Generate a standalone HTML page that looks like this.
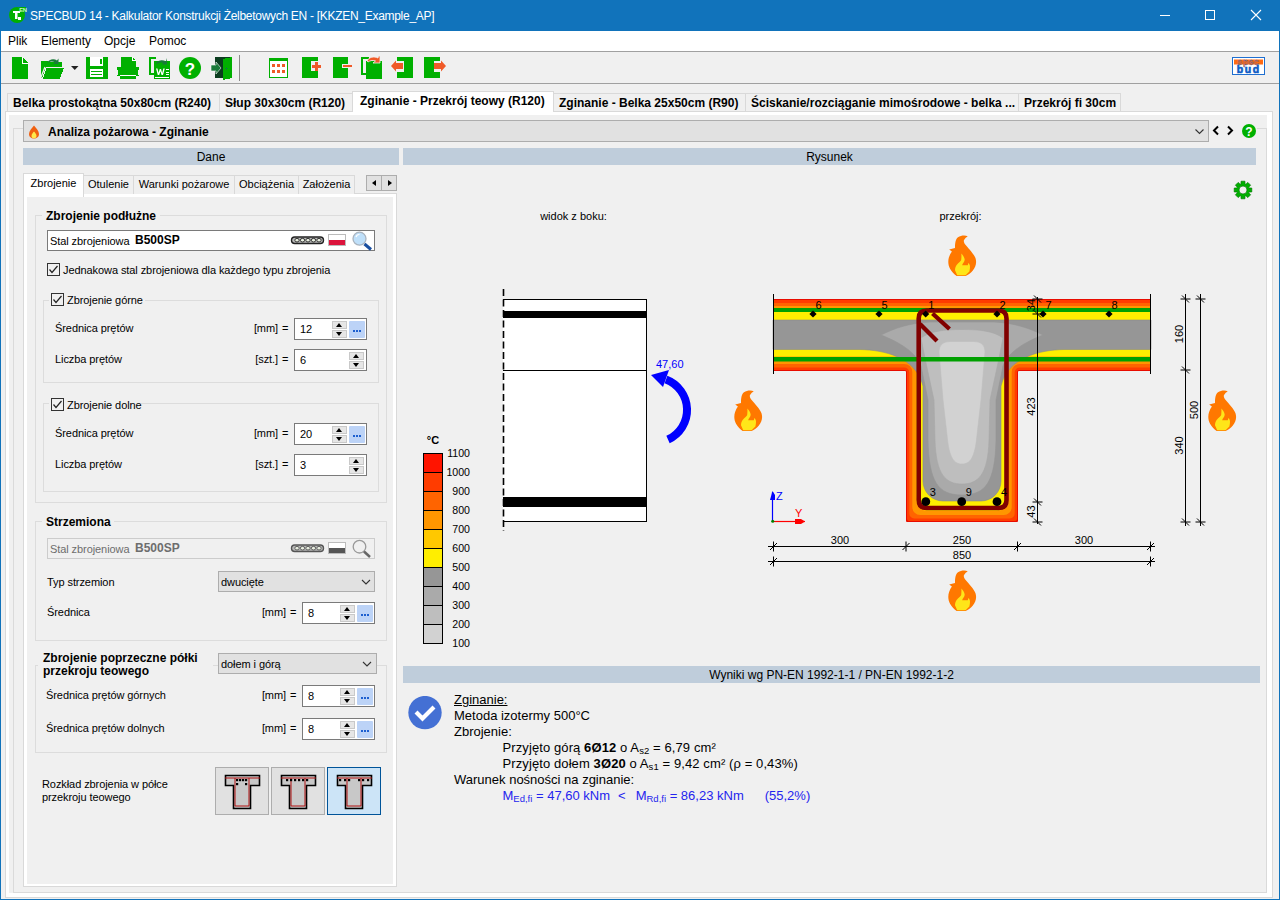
<!DOCTYPE html>
<html><head><meta charset="utf-8">
<style>
*{box-sizing:border-box;margin:0;padding:0}
html,body{width:1280px;height:900px;overflow:hidden;background:#f0f0f0;font-family:"Liberation Sans",sans-serif;font-size:12px;color:#000}
.a{position:absolute}
#title{left:0;top:0;width:1280px;height:31px;background:#1173bb}
#title .t{left:30px;top:9px;color:#fff;font-size:12px;letter-spacing:-0.29px;white-space:nowrap}
#menu{left:1px;top:31px;width:1278px;height:20px;background:#fff}
#menu span{position:absolute;top:3px}
.sep{background:#a0a0a0}
.tab{position:absolute;top:93px;height:19px;background:#f0f0f0;border:1px solid #d9d9d9;border-bottom:none;font-weight:bold;font-size:12px;white-space:nowrap;padding:2px 0 0 5px}
.tab.sel{top:91px;height:21px;background:#fff;border-color:#d9d9d9;z-index:2}
.hdr{background:#bfcddb;height:17px;text-align:center;font-size:12px;line-height:18px}

.r{font-size:11px;letter-spacing:-0.08px;line-height:13px;white-space:nowrap;position:absolute;margin-top:1px}
.b{font-weight:bold;font-size:12px;line-height:14px;white-space:nowrap;position:absolute}
.grp{position:absolute;border:1px solid #dcdcdc}
.itab{position:absolute;top:175px;height:19px;border:1px solid #d9d9d9;border-bottom:none;background:#f0f0f0;font-size:11px;line-height:16px;padding-left:0;text-align:center;white-space:nowrap}
.inp{position:absolute;width:73px;height:22px;background:#fff;border:1px solid #7a7a7a}
.inp .v{position:absolute;left:5px;top:4px;font-size:11px;line-height:13px}
.spn{position:absolute;width:15px;height:8px;background:#e6e6e6;border:1px solid #c9c9c9}
.spn i{position:absolute;left:3px;width:0;height:0;border-left:3.5px solid transparent;border-right:3.5px solid transparent}
.spn.u i{top:1px;border-bottom:4px solid #000}
.spn.d i{top:1px;border-top:4px solid #000}
.dots{position:absolute;width:16px;height:17px;background:#bcd3f7;border-radius:1px}
.dots b{position:absolute;top:9px;width:2px;height:2px;background:#1c5fd0}
.chk{position:absolute;width:13px;height:13px;border:1px solid #333;background:#f0f0f0}
.dd{position:absolute;background:#e1e1e1;border:1px solid #adadad}
.mat{position:absolute;width:328px;height:21px;background:#fff;border:1px solid #7a7a7a}
</style></head><body>
<!-- window frame -->
<div class="a" style="left:0;top:0;width:1px;height:900px;background:#1173bb"></div>
<div class="a" style="left:1279px;top:0;width:1px;height:900px;background:#1173bb"></div>
<div class="a" style="left:0;top:899px;width:1280px;height:1px;background:#1173bb"></div>
<div id="title" class="a">
  <div class="a t">SPECBUD 14 - Kalkulator Konstrukcji Żelbetowych EN - [KKZEN_Example_AP]</div>
</div>
<div id="menu" class="a">
  <span style="left:7px">Plik</span><span style="left:40px">Elementy</span><span style="left:103px">Opcje</span><span style="left:148px">Pomoc</span>
</div>
<div class="a sep" style="left:1px;top:51px;width:1278px;height:1px"></div>
<div class="a sep" style="left:1px;top:83px;width:1278px;height:1px"></div>

<!-- document tabs -->
<div class="tab" style="left:7px;width:213px">Belka prostokątna 50x80cm (R240)</div>
<div class="tab" style="left:219px;width:134px">Słup 30x30cm (R120)</div>
<div class="tab sel" style="left:352px;width:202px;padding-left:7px">Zginanie - Przekrój teowy (R120)</div>
<div class="tab" style="left:553px;width:193px">Zginanie - Belka 25x50cm (R90)</div>
<div class="tab" style="left:745px;width:274px">Ściskanie/rozciąganie mimośrodowe - belka ...</div>
<div class="tab" style="left:1018px;width:103px">Przekrój fi 30cm</div>

<!-- doc panel -->
<div class="a" style="left:5px;top:111px;width:1268px;height:787px;background:#fff;border:1px solid #d9d9d9"></div>
<div class="a" style="left:9px;top:115px;width:1258px;height:778px;background:#f0f0f0"></div>

<!-- function combo -->
<div class="a" style="left:23px;top:120px;width:1186px;height:22px;background:#e1e1e1;border:1px solid #adadad"></div>
<div class="a" style="left:48px;top:125px;font-weight:bold">Analiza pożarowa - Zginanie</div>

<div class="a hdr" style="left:23px;top:148px;width:376px">Dane</div>
<div class="a hdr" style="left:403px;top:148px;width:853px">Rysunek</div>


<!-- ===== LEFT PANEL ===== -->
<!-- inner frame lines -->
<div class="a" style="left:13px;top:128px;width:1254px;height:765px;border:1px solid #dadada;border-top:none"></div><div class="a" style="left:13px;top:128px;width:10px;height:1px;background:#dadada"></div><div class="a" style="left:1257px;top:128px;width:10px;height:1px;background:#dadada"></div>
<!-- Left tab page frame -->
<div class="a" style="left:23px;top:193px;width:374px;height:694px;background:#fff;border:1px solid #d9d9d9"></div>
<div class="a" style="left:27px;top:197px;width:366px;height:687px;background:#f0f0f0"></div>
<!-- inner tabs -->
<div class="itab" style="left:83px;width:51px">Otulenie</div>
<div class="itab" style="left:133px;width:102px">Warunki pożarowe</div>
<div class="itab" style="left:234px;width:65px">Obciążenia</div>
<div class="itab" style="left:298px;width:57px">Założenia</div>
<div class="itab" style="left:23px;top:173px;width:61px;height:24px;background:#fff;border-color:#d9d9d9;line-height:18px">Zbrojenie</div>
<div class="a" style="left:366px;top:175px;width:16px;height:16px;background:#e1e1e1;border:1px solid #adadad"><i style="position:absolute;left:5px;top:4px;border-top:3.5px solid transparent;border-bottom:3.5px solid transparent;border-right:4px solid #000"></i></div>
<div class="a" style="left:381px;top:175px;width:16px;height:16px;background:#e1e1e1;border:1px solid #adadad"><i style="position:absolute;left:6px;top:4px;border-top:3.5px solid transparent;border-bottom:3.5px solid transparent;border-left:4px solid #000"></i></div>

<!-- group: Zbrojenie podluzne -->
<div class="grp" style="left:35px;top:215px;width:352px;height:288px"></div>
<div class="a" style="left:42px;top:209px;width:118px;height:12px;background:#f0f0f0"></div>
<div class="b" style="left:46px;top:209px">Zbrojenie podłużne</div>
<div class="mat" style="left:47px;top:230px"></div>
<div class="r" style="left:50px;top:234px">Stal zbrojeniowa</div>
<div class="b" style="left:135px;top:233px">B500SP</div>
<div id="ic1" class="a" style="left:290px;top:233px;width:84px;height:18px"></div>

<div class="chk" style="left:47px;top:263px"></div>
<div class="r" style="left:63px;top:263px">Jednakowa stal zbrojeniowa dla każdego typu zbrojenia</div>

<div class="grp" style="left:43px;top:300px;width:336px;height:83px"></div>
<div class="a" style="left:49px;top:292px;width:96px;height:14px;background:#f0f0f0"></div>
<div class="chk" style="left:51px;top:293px"></div>
<div class="r" style="left:67px;top:293px">Zbrojenie górne</div>
<div class="r" style="left:55px;top:321px">Średnica prętów</div>
<div class="r" style="left:253px;top:321px;width:25px;text-align:right">[mm]</div><div class="r" style="left:282px;top:321px">=</div>
<div class="inp" style="left:294px;top:318px"><span class="v">12</span><div class="spn u" style="left:37px;top:2px"><i></i></div><div class="spn d" style="left:37px;top:11px"><i></i></div><div class="dots" style="left:54px;top:2px"><b style="left:4px"></b><b style="left:7px"></b><b style="left:10px"></b></div></div>
<div class="r" style="left:55px;top:352px">Liczba prętów</div>
<div class="r" style="left:253px;top:352px;width:25px;text-align:right">[szt.]</div><div class="r" style="left:282px;top:352px">=</div>
<div class="inp" style="left:294px;top:349px"><span class="v">6</span><div class="spn u" style="left:54px;top:2px"><i></i></div><div class="spn d" style="left:54px;top:11px"><i></i></div></div>

<div class="grp" style="left:43px;top:403px;width:336px;height:89px"></div>
<div class="a" style="left:49px;top:397px;width:92px;height:14px;background:#f0f0f0"></div>
<div class="chk" style="left:51px;top:398px"></div>
<div class="r" style="left:67px;top:398px">Zbrojenie dolne</div>
<div class="r" style="left:55px;top:426px">Średnica prętów</div>
<div class="r" style="left:253px;top:426px;width:25px;text-align:right">[mm]</div><div class="r" style="left:282px;top:426px">=</div>
<div class="inp" style="left:294px;top:423px"><span class="v">20</span><div class="spn u" style="left:37px;top:2px"><i></i></div><div class="spn d" style="left:37px;top:11px"><i></i></div><div class="dots" style="left:54px;top:2px"><b style="left:4px"></b><b style="left:7px"></b><b style="left:10px"></b></div></div>
<div class="r" style="left:55px;top:457px">Liczba prętów</div>
<div class="r" style="left:253px;top:457px;width:25px;text-align:right">[szt.]</div><div class="r" style="left:282px;top:457px">=</div>
<div class="inp" style="left:294px;top:454px"><span class="v">3</span><div class="spn u" style="left:54px;top:2px"><i></i></div><div class="spn d" style="left:54px;top:11px"><i></i></div></div>

<!-- group: Strzemiona -->
<div class="grp" style="left:35px;top:521px;width:352px;height:120px"></div>
<div class="a" style="left:42px;top:515px;width:72px;height:12px;background:#f0f0f0"></div>
<div class="b" style="left:46px;top:515px">Strzemiona</div>
<div class="mat" style="left:47px;top:538px;height:21px;background:#f0f0f0;border-color:#cccccc"></div>
<div class="r" style="left:50px;top:542px;color:#6d6d6d">Stal zbrojeniowa</div>
<div class="b" style="left:135px;top:541px;color:#6d6d6d">B500SP</div>
<div id="ic2" class="a" style="left:290px;top:541px;width:84px;height:18px"></div>
<div class="r" style="left:47px;top:575px">Typ strzemion</div>
<div class="dd" style="left:218px;top:571px;width:157px;height:21px"></div>
<div class="r" style="left:221px;top:575px">dwucięte</div>
<div class="r" style="left:47px;top:605px">Średnica</div>
<div class="r" style="left:261px;top:605px;width:25px;text-align:right">[mm]</div><div class="r" style="left:290px;top:605px">=</div>
<div class="inp" style="left:302px;top:602px"><span class="v">8</span><div class="spn u" style="left:37px;top:2px"><i></i></div><div class="spn d" style="left:37px;top:11px"><i></i></div><div class="dots" style="left:54px;top:2px"><b style="left:4px"></b><b style="left:7px"></b><b style="left:10px"></b></div></div>

<!-- group: Zbrojenie poprzeczne -->
<div class="grp" style="left:35px;top:665px;width:352px;height:88px"></div>
<div class="a" style="left:38px;top:650px;width:175px;height:28px;background:#f0f0f0"></div>
<div class="b" style="left:43px;top:652px;line-height:13px">Zbrojenie poprzeczne półki<br>przekroju teowego</div>
<div class="dd" style="left:218px;top:653px;width:159px;height:21px"></div>
<div class="r" style="left:221px;top:657px">dołem i górą</div>
<div class="r" style="left:46px;top:688px">Średnica prętów górnych</div>
<div class="r" style="left:261px;top:688px;width:25px;text-align:right">[mm]</div><div class="r" style="left:290px;top:688px">=</div>
<div class="inp" style="left:302px;top:685px"><span class="v">8</span><div class="spn u" style="left:37px;top:2px"><i></i></div><div class="spn d" style="left:37px;top:11px"><i></i></div><div class="dots" style="left:54px;top:2px"><b style="left:4px"></b><b style="left:7px"></b><b style="left:10px"></b></div></div>
<div class="r" style="left:46px;top:721px">Średnica prętów dolnych</div>
<div class="r" style="left:261px;top:721px;width:25px;text-align:right">[mm]</div><div class="r" style="left:290px;top:721px">=</div>
<div class="inp" style="left:302px;top:718px"><span class="v">8</span><div class="spn u" style="left:37px;top:2px"><i></i></div><div class="spn d" style="left:37px;top:11px"><i></i></div><div class="dots" style="left:54px;top:2px"><b style="left:4px"></b><b style="left:7px"></b><b style="left:10px"></b></div></div>

<div class="r" style="left:42px;top:777px">Rozkład zbrojenia w półce<br>przekroju teowego</div>
<div id="tb1" class="a" style="left:215px;top:767px;width:54px;height:48px;background:#e1e1e1;border:1px solid #adadad"></div>
<div id="tb2" class="a" style="left:271px;top:767px;width:54px;height:48px;background:#e1e1e1;border:1px solid #adadad"></div>
<div id="tb3" class="a" style="left:327px;top:767px;width:54px;height:48px;background:#cce4f7;border:1px solid #005499"></div>
<!--DRAW-->
<svg class="a" style="left:0;top:0" width="1280" height="900" viewBox="0 0 1280 900">
<path d="M773,299H1151V371H1019A1,1 0 0 0 1018,372V521A1,1 0 0 1 1017,522H907A1,1 0 0 1 906,521V372A1,1 0 0 0 905,371H773Z" fill="#e80c00"/>
<path d="M773,300H1151V370H1020A3,3 0 0 0 1017,373V519A2,2 0 0 1 1015,521H909A2,2 0 0 1 907,519V373A3,3 0 0 0 904,370H773Z" fill="#ff3c00"/>
<path d="M773,303H1151V367.5H1019.7A5,5 0 0 0 1014.7,372.5V513.5A5,5 0 0 1 1009.7,518.5H914.3A5,5 0 0 1 909.3,513.5V372.5A5,5 0 0 0 904.3,367.5H773Z" fill="#ff6400"/>
<path d="M773,306H1151V364H1019.7A8,8 0 0 0 1011.7,372V507A8,8 0 0 1 1003.7,515H920.3A8,8 0 0 1 912.3,507V372A8,8 0 0 0 904.3,364H773Z" fill="#ff9600"/>
<path d="M773,309H1151V360H1019A11,11 0 0 0 1008,371V500A11,11 0 0 1 997,511H927A11,11 0 0 1 916,500V371A11,11 0 0 0 905,360H773Z" fill="#ffc800"/>
<path d="M773,312H1151V356H1021.5A14,14 0 0 0 1007.5,370V495A13,13 0 0 1 994.5,508H929.5A13,13 0 0 1 916.5,495V370A14,14 0 0 0 902.5,356H773Z" fill="#ffee00"/>
<path d="M773,320H1151V349.5H1064C1040,350 1008,357 1001,386V481A20,20 0 0 1 981,501H943A20,20 0 0 1 923,481V386C916,357 884,350 860,349.5H773Z" fill="#969696" stroke="#8a8a8a" stroke-width="0.6"/>
<path d="M881,335C895,328 910,323 930,322H994C1014,323 1029,328 1043,335C1025,342 1008,352 1003,366L996,400L996,440C995,482 986,495 962,495C938,495 929,482 928,440L928,400L921,366C916,352 899,342 881,335Z" fill="#aaaaaa" stroke="#959595" stroke-width="0.6"/>
<path d="M921,338C930,331 945,329.5 962,329.5C979,329.5 994,331 1003,338L998,363L990,400L989,440C988,475 978,484 962,484C946,484 936,475 935,440L934,400L926,363Z" fill="#bebebe" stroke="#a8a8a8" stroke-width="0.6"/>
<path d="M939,352Q939,341.5 950,341.5H974Q985,341.5 985,352L981,400L977,435C975,458 970,464 962,464C954,464 949,458 947,435L943,400Z" fill="#d2d2d2" stroke="#bdbdbd" stroke-width="0.6"/>
<rect x="773" y="308" width="378" height="4" fill="#00a000"/>
<rect x="773" y="357" width="378" height="4.5" fill="#00a000"/>
<path d="M918.7,318.5Q918.7,310.5 926.7,310.5H998.5Q1006.5,310.5 1006.5,318.5V500Q1006.5,508 998.5,508H926.7Q918.7,508 918.7,500Z" fill="none" stroke="#800000" stroke-width="4.6"/>
<path d="M920,324L937,341M932.5,313.5L949.5,329" stroke="#800000" stroke-width="4.3" fill="none"/>
<path d="M809.4,314L813,310.4L816.6,314L813,317.6Z" fill="#000"/>
<path d="M875.4,314L879,310.4L882.6,314L879,317.6Z" fill="#000"/>
<path d="M922.1,314L925.7,310.4L929.3000000000001,314L925.7,317.6Z" fill="#000"/>
<path d="M993.4,314L997,310.4L1000.6,314L997,317.6Z" fill="#000"/>
<path d="M1039.4,314L1043,310.4L1046.6,314L1043,317.6Z" fill="#000"/>
<path d="M1105.4,314L1109,310.4L1112.6,314L1109,317.6Z" fill="#000"/>
<circle cx="925.8" cy="501.7" r="4.4" fill="#000"/>
<circle cx="961.7" cy="501.7" r="4.4" fill="#000"/>
<circle cx="997" cy="501.7" r="4.4" fill="#000"/>
<text x="818.5" y="309" font-size="11" font-family="Liberation Sans" text-anchor="middle" fill="#000">6</text>
<text x="884.5" y="309" font-size="11" font-family="Liberation Sans" text-anchor="middle" fill="#000">5</text>
<text x="931.2" y="309" font-size="11" font-family="Liberation Sans" text-anchor="middle" fill="#000">1</text>
<text x="1002.5" y="309" font-size="11" font-family="Liberation Sans" text-anchor="middle" fill="#000">2</text>
<text x="1048.5" y="309" font-size="11" font-family="Liberation Sans" text-anchor="middle" fill="#000">7</text>
<text x="1114.5" y="309" font-size="11" font-family="Liberation Sans" text-anchor="middle" fill="#000">8</text>
<text x="932.8" y="496" font-size="11" font-family="Liberation Sans" text-anchor="middle" fill="#000">3</text>
<text x="968.7" y="496" font-size="11" font-family="Liberation Sans" text-anchor="middle" fill="#000">9</text>
<text x="1004" y="496" font-size="11" font-family="Liberation Sans" text-anchor="middle" fill="#000">4</text>
<path d="M773.5,294V374M1150.5,294V374" stroke="#000" stroke-width="1" fill="none" shape-rendering="crispEdges"/>
<path d="M1037.5,297V524" stroke="#000" stroke-width="1" fill="none" shape-rendering="crispEdges"/>
<path d="M1032.5,299H1042.5M1034.0,295.5L1041.0,302.5" stroke="#000" stroke-width="1" fill="none"/>
<path d="M1032.5,314H1042.5M1034.0,310.5L1041.0,317.5" stroke="#000" stroke-width="1" fill="none"/>
<path d="M1032.5,502H1042.5M1034.0,498.5L1041.0,505.5" stroke="#000" stroke-width="1" fill="none"/>
<path d="M1032.5,522H1042.5M1034.0,518.5L1041.0,525.5" stroke="#000" stroke-width="1" fill="none"/>
<path d="M1185.5,294V526M1200.5,294V526" stroke="#000" stroke-width="1" fill="none" shape-rendering="crispEdges"/>
<path d="M1180.5,299H1190.5M1182.0,295.5L1189.0,302.5" stroke="#000" stroke-width="1" fill="none"/>
<path d="M1180.5,370H1190.5M1182.0,366.5L1189.0,373.5" stroke="#000" stroke-width="1" fill="none"/>
<path d="M1180.5,522H1190.5M1182.0,518.5L1189.0,525.5" stroke="#000" stroke-width="1" fill="none"/>
<path d="M1195.5,299H1205.5M1197.0,295.5L1204.0,302.5" stroke="#000" stroke-width="1" fill="none"/>
<path d="M1195.5,522H1205.5M1197.0,518.5L1204.0,525.5" stroke="#000" stroke-width="1" fill="none"/>
<path d="M768,546.5H1155M768,561.5H1155" stroke="#000" stroke-width="1" fill="none" shape-rendering="crispEdges"/>
<path d="M773.5,541.5V551.5M770.0,550.0L777.0,543.0" stroke="#000" stroke-width="1" fill="none"/>
<path d="M906,541.5V551.5M902.5,550.0L909.5,543.0" stroke="#000" stroke-width="1" fill="none"/>
<path d="M1017.5,541.5V551.5M1014.0,550.0L1021.0,543.0" stroke="#000" stroke-width="1" fill="none"/>
<path d="M1150.5,541.5V551.5M1147.0,550.0L1154.0,543.0" stroke="#000" stroke-width="1" fill="none"/>
<path d="M773.5,556.5V566.5M770.0,565.0L777.0,558.0" stroke="#000" stroke-width="1" fill="none"/>
<path d="M1150.5,556.5V566.5M1147.0,565.0L1154.0,558.0" stroke="#000" stroke-width="1" fill="none"/>
<text x="1178.5" y="334" transform="rotate(-90 1178.5 334)" font-size="11" font-family="Liberation Sans" text-anchor="middle" dominant-baseline="central" fill="#000">160</text>
<text x="1178.5" y="445.5" transform="rotate(-90 1178.5 445.5)" font-size="11" font-family="Liberation Sans" text-anchor="middle" dominant-baseline="central" fill="#000">340</text>
<text x="1193.5" y="410" transform="rotate(-90 1193.5 410)" font-size="11" font-family="Liberation Sans" text-anchor="middle" dominant-baseline="central" fill="#000">500</text>
<text x="1030.5" y="406.5" transform="rotate(-90 1030.5 406.5)" font-size="11" font-family="Liberation Sans" text-anchor="middle" dominant-baseline="central" fill="#000">423</text>
<text x="1030.5" y="511.5" transform="rotate(-90 1030.5 511.5)" font-size="11" font-family="Liberation Sans" text-anchor="middle" dominant-baseline="central" fill="#000">43</text>
<text x="1030.5" y="305" transform="rotate(-90 1030.5 305)" font-size="11" font-family="Liberation Sans" text-anchor="middle" dominant-baseline="central" fill="#000">34</text>
<text x="840" y="544" font-size="11" font-family="Liberation Sans" text-anchor="middle" fill="#000">300</text>
<text x="962" y="544" font-size="11" font-family="Liberation Sans" text-anchor="middle" fill="#000">250</text>
<text x="1084" y="544" font-size="11" font-family="Liberation Sans" text-anchor="middle" fill="#000">300</text>
<text x="962" y="559" font-size="11" font-family="Liberation Sans" text-anchor="middle" fill="#000">850</text>
<path d="M772.5,521V492" stroke="#0000ff" stroke-width="1.2"/><path d="M770,500H775V495L772.5,491Z" fill="#0000ff"/>
<path d="M773,521.5H805" stroke="#ff0000" stroke-width="1.2"/><path d="M795,519H801L805,521.5L801,524H795Z" fill="#ff0000"/>
<circle cx="772.7" cy="521.3" r="1.5" fill="#008000"/>
<text x="776" y="500" font-size="11" font-family="Liberation Sans" fill="#0000ff">Z</text>
<text x="795" y="517" font-size="11" font-family="Liberation Sans" fill="#ff0000">Y</text>
<g transform="translate(948,235)"><path d="M19.8,1.4C17.5,0 13,0.3 10,2.2C7.5,4 7,8 7,13.1L1.2,14.5L3.9,16.4C1.5,20 0.3,23 0.3,27C0.3,32 3,37 8.7,40.9H17.6C23,38.5 28.1,33.5 28.1,27C28.1,22 26,19.5 17,9.2C15.5,7 15.8,5.5 15.9,5.3C17,3 18.5,2 19.8,1.4Z" fill="#ff7800"/><path d="M13.4,18.4C15,20 16.7,23 16.7,24.7C16.7,27 14.2,28.5 14.2,30.3H19.8L20.3,28.1C21.5,29 22,30.5 22,31.4C22,34 21.4,36.4 21.4,36.4L17.6,40.3H9.2L7,35.3C7,33 7.8,31.4 7.8,31.4C9.5,28.5 13.1,26 13.1,25.3C13.6,23 13.4,18.4 13.4,18.4Z" fill="#ffe619"/></g>
<g transform="translate(734,390)"><path d="M19.8,1.4C17.5,0 13,0.3 10,2.2C7.5,4 7,8 7,13.1L1.2,14.5L3.9,16.4C1.5,20 0.3,23 0.3,27C0.3,32 3,37 8.7,40.9H17.6C23,38.5 28.1,33.5 28.1,27C28.1,22 26,19.5 17,9.2C15.5,7 15.8,5.5 15.9,5.3C17,3 18.5,2 19.8,1.4Z" fill="#ff7800"/><path d="M13.4,18.4C15,20 16.7,23 16.7,24.7C16.7,27 14.2,28.5 14.2,30.3H19.8L20.3,28.1C21.5,29 22,30.5 22,31.4C22,34 21.4,36.4 21.4,36.4L17.6,40.3H9.2L7,35.3C7,33 7.8,31.4 7.8,31.4C9.5,28.5 13.1,26 13.1,25.3C13.6,23 13.4,18.4 13.4,18.4Z" fill="#ffe619"/></g>
<g transform="translate(1208,390)"><path d="M19.8,1.4C17.5,0 13,0.3 10,2.2C7.5,4 7,8 7,13.1L1.2,14.5L3.9,16.4C1.5,20 0.3,23 0.3,27C0.3,32 3,37 8.7,40.9H17.6C23,38.5 28.1,33.5 28.1,27C28.1,22 26,19.5 17,9.2C15.5,7 15.8,5.5 15.9,5.3C17,3 18.5,2 19.8,1.4Z" fill="#ff7800"/><path d="M13.4,18.4C15,20 16.7,23 16.7,24.7C16.7,27 14.2,28.5 14.2,30.3H19.8L20.3,28.1C21.5,29 22,30.5 22,31.4C22,34 21.4,36.4 21.4,36.4L17.6,40.3H9.2L7,35.3C7,33 7.8,31.4 7.8,31.4C9.5,28.5 13.1,26 13.1,25.3C13.6,23 13.4,18.4 13.4,18.4Z" fill="#ffe619"/></g>
<g transform="translate(948,570)"><path d="M19.8,1.4C17.5,0 13,0.3 10,2.2C7.5,4 7,8 7,13.1L1.2,14.5L3.9,16.4C1.5,20 0.3,23 0.3,27C0.3,32 3,37 8.7,40.9H17.6C23,38.5 28.1,33.5 28.1,27C28.1,22 26,19.5 17,9.2C15.5,7 15.8,5.5 15.9,5.3C17,3 18.5,2 19.8,1.4Z" fill="#ff7800"/><path d="M13.4,18.4C15,20 16.7,23 16.7,24.7C16.7,27 14.2,28.5 14.2,30.3H19.8L20.3,28.1C21.5,29 22,30.5 22,31.4C22,34 21.4,36.4 21.4,36.4L17.6,40.3H9.2L7,35.3C7,33 7.8,31.4 7.8,31.4C9.5,28.5 13.1,26 13.1,25.3C13.6,23 13.4,18.4 13.4,18.4Z" fill="#ffe619"/></g>
<rect x="503" y="299" width="144" height="223" fill="#fff"/>
<path d="M503,299.5H646.5V521.5H503" stroke="#000" stroke-width="1" fill="none" shape-rendering="crispEdges"/>
<rect x="503" y="311" width="144" height="7" fill="#000"/>
<rect x="503" y="497" width="144" height="10" fill="#000"/>
<path d="M503,370.5H647" stroke="#000" stroke-width="1" fill="none" shape-rendering="crispEdges"/>
<path d="M503.5,289V531" stroke="#000" stroke-width="1.6" stroke-dasharray="7,3.5" fill="none"/>
<path d="M666,379.5A32.5,32.5 0 0 1 668,439.5" stroke="#0000ff" stroke-width="8" fill="none"/>
<path d="M651,375L669,370L663,387Z" fill="#0000ff"/>
<text x="656" y="368" font-size="11" font-family="Liberation Sans" fill="#0000ff">47,60</text>
<text x="573.5" y="220" font-size="11" font-family="Liberation Sans" text-anchor="middle" fill="#000">widok z boku:</text>
<text x="960.5" y="220" font-size="11" font-family="Liberation Sans" text-anchor="middle" fill="#000">przekrój:</text>
<rect x="423.5" y="453.5" width="19" height="19" fill="#ff1400" stroke="#000" stroke-width="1" shape-rendering="crispEdges"/>
<rect x="423.5" y="472.5" width="19" height="19" fill="#ff3c00" stroke="#000" stroke-width="1" shape-rendering="crispEdges"/>
<rect x="423.5" y="491.5" width="19" height="19" fill="#ff6400" stroke="#000" stroke-width="1" shape-rendering="crispEdges"/>
<rect x="423.5" y="510.5" width="19" height="19" fill="#ff9600" stroke="#000" stroke-width="1" shape-rendering="crispEdges"/>
<rect x="423.5" y="529.5" width="19" height="19" fill="#ffc800" stroke="#000" stroke-width="1" shape-rendering="crispEdges"/>
<rect x="423.5" y="548.5" width="19" height="19" fill="#ffee00" stroke="#000" stroke-width="1" shape-rendering="crispEdges"/>
<rect x="423.5" y="567.5" width="19" height="19" fill="#969696" stroke="#000" stroke-width="1" shape-rendering="crispEdges"/>
<rect x="423.5" y="586.5" width="19" height="19" fill="#aaaaaa" stroke="#000" stroke-width="1" shape-rendering="crispEdges"/>
<rect x="423.5" y="605.5" width="19" height="19" fill="#bebebe" stroke="#000" stroke-width="1" shape-rendering="crispEdges"/>
<rect x="423.5" y="624.5" width="19" height="19" fill="#d2d2d2" stroke="#000" stroke-width="1" shape-rendering="crispEdges"/>
<text x="470" y="457" font-size="10.6" font-family="Liberation Sans" text-anchor="end" fill="#000">1100</text>
<text x="470" y="476" font-size="10.6" font-family="Liberation Sans" text-anchor="end" fill="#000">1000</text>
<text x="470" y="495" font-size="10.6" font-family="Liberation Sans" text-anchor="end" fill="#000">900</text>
<text x="470" y="514" font-size="10.6" font-family="Liberation Sans" text-anchor="end" fill="#000">800</text>
<text x="470" y="533" font-size="10.6" font-family="Liberation Sans" text-anchor="end" fill="#000">700</text>
<text x="470" y="552" font-size="10.6" font-family="Liberation Sans" text-anchor="end" fill="#000">600</text>
<text x="470" y="571" font-size="10.6" font-family="Liberation Sans" text-anchor="end" fill="#000">500</text>
<text x="470" y="590" font-size="10.6" font-family="Liberation Sans" text-anchor="end" fill="#000">400</text>
<text x="470" y="609" font-size="10.6" font-family="Liberation Sans" text-anchor="end" fill="#000">300</text>
<text x="470" y="628" font-size="10.6" font-family="Liberation Sans" text-anchor="end" fill="#000">200</text>
<text x="470" y="647" font-size="10.6" font-family="Liberation Sans" text-anchor="end" fill="#000">100</text>
<text x="433" y="444" font-size="11" font-weight="bold" font-family="Liberation Sans" text-anchor="middle" fill="#000">°C</text>
</svg>
<!--/DRAW-->
<!--RESULTS-->
<div class="a hdr" style="left:403px;top:666px;width:857px">Wyniki wg PN-EN 1992-1-1 / PN-EN 1992-1-2</div>
<svg class="a" style="left:408px;top:696px" width="34" height="34" viewBox="0 0 34 34"><circle cx="17" cy="16.6" r="16.7" fill="#4470d4"/><path d="M9.5,17.5L14.5,22.5L24.5,12.5" stroke="#fff" stroke-width="4.2" fill="none" stroke-linecap="square"/></svg>
<div class="a" style="left:454px;top:692px;font-size:13px;line-height:16px;white-space:nowrap">
<div style="text-decoration:underline">Zginanie:</div>
<div>Metoda izotermy 500°C</div>
<div>Zbrojenie:</div>
<div style="padding-left:48.5px;letter-spacing:0.1px">Przyjęto górą <b>6Ø12</b> o A<sub>s2</sub> = 6,79 cm²</div>
<div style="padding-left:48.5px;letter-spacing:0.1px">Przyjęto dołem <b>3Ø20</b> o A<sub>s1</sub> = 9,42 cm² (ρ = 0,43%)</div>
<div>Warunek nośności na zginanie:</div>
<div style="padding-left:48.5px;color:#2424ee">M<sub>Ed,fi</sub> = 47,60 kNm<span style="display:inline-block;width:8px"></span>&lt;<span style="display:inline-block;width:10px"></span>M<sub>Rd,fi</sub> = 86,23 kNm<span style="display:inline-block;width:21px"></span>(55,2%)</div>
</div>
<style>sub{font-size:9.5px;vertical-align:-2px;line-height:0}</style>

<!--/RESULTS-->
<!--TOOLBAR-->
<svg class="a" style="left:0;top:52px" width="460" height="32" viewBox="0 52 460 32" shape-rendering="crispEdges">
<g fill="#00b000">
<!-- new -->
<path d="M12,57H22.5L28,62.5V79H12Z"/>
<!-- open -->
<path d="M41,60.5H48V62H62V67H46L42,78H41Z"/>
<path d="M46.5,67.5H64L60,78.5H43Z"/>
<!-- save -->
<path d="M86,57H108V79H86Z"/>
<!-- printer -->
<path d="M121,57H132L136,60V67H121Z"/>
<path d="M117,67H139V76H117Z"/>
<path d="M120,76H136V79H120Z"/>
<!-- word -->
<path d="M149,57H156V59H151V73H154V75H149Z"/>
<path d="M154,61H170V79H154Z"/>
<!-- help -->
<circle cx="190" cy="68" r="11" shape-rendering="auto"/>
<!-- exit door -->
<path d="M223,59L232,57V78L223,80Z"/>
<!-- grid -->
<path d="M269,58H288V78H269Z"/>
<!-- add/remove/copy/arrows -->
<path d="M302,57H318V78H302Z"/>
<path d="M333,57H348V78H333Z"/>
<path d="M361,57H369V59H363V73H366V75H361Z"/>
<path d="M366,61H382V79H366Z"/>
<path d="M397,57H413V78H397Z"/>
<path d="M424,57H440V78H424Z"/>
</g>
<!-- new doc fold -->
<path d="M22.5,57V63H28" stroke="#fff" stroke-width="1" fill="none"/>
<path d="M23.5,57H28V62Z" fill="#f0f0f0"/>
<!-- open arrow dark -->
<path d="M47,63C49,59 54,58.5 57,60.5L58.5,58.5V64H53L55,62.5C53,61 50,61.5 47,63Z" fill="#1a7a3a" shape-rendering="auto"/>
<path d="M45,67L40.5,78.5" stroke="#f0f0f0" stroke-width="1.3" shape-rendering="auto"/>
<path d="M71,66H78.5L74.75,70Z" fill="#222" shape-rendering="auto"/>
<!-- save details -->
<path d="M90,57H103V66H90Z" fill="#fff"/>
<path d="M100,59H102V64H100Z" fill="#00b000"/>
<path d="M90,69H103V77H90Z" fill="#fff"/>
<path d="M91,71H102V72H91ZM91,73.5H102V74.5H91Z" fill="#00b000"/>
<!-- printer details -->
<path d="M132,57V60H136" stroke="#fff" fill="none"/>
<path d="M120,75H136V76H120Z" fill="#fff"/>
<path d="M117,70H118V75H117ZM138,70H139V75H138Z" fill="#f0f0f0"/>
<!-- word details -->
<path d="M155,67H166V77H155Z" fill="#00b000"/>
<path d="M156,68.5H157.5L158.5,73L159.8,69H161L162.2,73L163.3,68.5H164.8L163,75H161.6L160.4,71.2L159.2,75H157.8Z" fill="#fff" shape-rendering="auto"/>
<path d="M166,69H169V70H166ZM166,71.5H169V72.5H166ZM166,74H169V75H166ZM155,77H169V78H155Z" fill="#fff"/>
<path d="M156,63C158,60 163,59.5 166,61.5L167,58V64.5H161.5L163.5,63C161,62 158.5,62.5 157,64Z" fill="#1a7a3a" shape-rendering="auto"/>
<!-- help ? -->
<text x="190" y="74.5" font-family="Liberation Sans" font-weight="bold" font-size="17" text-anchor="middle" fill="#fff" shape-rendering="auto">?</text>
<!-- exit -->
<path d="M215,57H232V59H223V78H215Z" fill="#0b3d1f"/>
<path d="M223,59L232,57V78L223,80Z" fill="#00b000"/>
<path d="M211,65H216V62L221,68L216,74V71H211Z" fill="#1a7a3a" stroke="#fff" stroke-width="0.6" shape-rendering="auto"/>
<rect x="225.5" y="67.5" width="1.2" height="1.2" fill="#1a4a8a"/>
<!-- grid -->
<path d="M270,61H287V77H270Z" fill="#fff"/>
<g fill="#f05a28"><rect x="272" y="64" width="3" height="3"/><rect x="277" y="64" width="3" height="3"/><rect x="282" y="64" width="3" height="3"/><rect x="272" y="70" width="3" height="3"/><rect x="277" y="70" width="3" height="3"/><rect x="282" y="70" width="3" height="3"/></g>
<!-- plus -->
<path d="M311,60.5H322V70.5H311Z" fill="#f0f0f0"/>
<path d="M315,61.5H318V64.5H321V67.5H318V70.5H315V67.5H312V64.5H315Z" fill="#f05a28"/>
<!-- minus -->
<path d="M342,63.5H353V67.5H342Z" fill="#f0f0f0"/>
<path d="M343,64.5H352V66.5H343Z" fill="#f05a28"/>
<!-- copy arrow -->
<path d="M367,61C369,57 374,56 378,58L378.5,56H380V63H373L375.5,61C373,60 370,60.5 368,62Z" fill="#f05a28" stroke="#f0f0f0" stroke-width="0.8" shape-rendering="auto"/>
<!-- arrow left -->
<path d="M397,60.5H404V71.5H397Z" fill="#f0f0f0"/>
<path d="M391,66L396,60.5V63H403V69H396V71.5Z" fill="#f05a28" shape-rendering="auto"/>
<!-- arrow right -->
<path d="M434,60.5H446V71.5H434Z" fill="#f0f0f0"/>
<path d="M446,66L441,60.5V63H434V69H441V71.5Z" fill="#f05a28" shape-rendering="auto"/>
<!-- separator -->
<rect x="239" y="55" width="1" height="26" fill="#8a8a8a"/>
</svg>
<!-- specbud logo -->
<svg class="a" style="left:1232px;top:57px" width="33" height="18" viewBox="0 0 33 18">
<rect x="0.5" y="0.5" width="32" height="17" fill="#fff" stroke="#1f6fd0" stroke-width="1"/>
<rect x="2" y="2.5" width="29" height="5" fill="#ff6a13"/>
<text x="16.5" y="8.2" font-family="Liberation Sans" font-weight="bold" font-size="8.5" text-anchor="middle" fill="#ff6a13" stroke="#2a5fb0" stroke-width="0.3" letter-spacing="0.6">spec</text>
<text x="16.8" y="15.6" font-family="Liberation Sans" font-weight="bold" font-size="10.5" text-anchor="middle" fill="#0d5cc4" stroke="#0d5cc4" stroke-width="0.6" letter-spacing="1.6">bud</text>
</svg>

<!--/TOOLBAR-->
<!--ICONS-->
<svg class="a" style="left:8px;top:6px" width="20" height="18" viewBox="8 6 20 18" overflow="visible">
<circle cx="17" cy="15" r="8" fill="#00b000"/>
<path d="M13,11H20V13H17.5V19H15V13H13Z" fill="#fff"/><rect x="18" y="17" width="3" height="3" fill="#fff"/>
<path d="M19,7H26V12H21Z" fill="#00b000"/><text x="19.3" y="11.8" font-family="Liberation Sans" font-size="5.8" font-weight="bold" fill="#c8f5c8" letter-spacing="-0.3">EN</text>
</svg>
<svg class="a" style="left:1150px;top:0" width="130" height="31" viewBox="1150 0 130 31">
<rect x="1160" y="15" width="10" height="1" fill="#fff"/>
<rect x="1205.5" y="10.5" width="9" height="9" fill="none" stroke="#fff" stroke-width="1"/>
<path d="M1251,10L1261,20M1261,10L1251,20" stroke="#fff" stroke-width="1.1"/>
</svg>
<svg class="a" style="left:28px;top:124px" width="12" height="15" viewBox="0 0 12 15">
<path d="M6,1.5C8,4 11,7 11,10C11,12.8 8.8,14.5 6,14.5C3.2,14.5 1,12.8 1,10C1,7 4,4 6,1.5Z" fill="#f06010"/>
<path d="M6,7.5C7.3,9 8.5,10.3 8.5,12C8.5,13.5 7.4,14.3 6,14.3C4.6,14.3 3.5,13.5 3.5,12C3.5,10.3 4.7,9 6,7.5Z" fill="#ffe84a"/>
</svg>
<svg class="a" style="left:1190px;top:118px" width="70" height="82" viewBox="1190 118 70 82">
<path d="M1195.5,129.5L1199.5,133.5L1203.5,129.5" stroke="#333" stroke-width="1.1" fill="none"/>
<path d="M1218,126.5L1214,130.5L1218,134.5" stroke="#000" stroke-width="2" fill="none"/>
<path d="M1228,126.5L1232,130.5L1228,134.5" stroke="#000" stroke-width="2" fill="none"/>
<circle cx="1249" cy="131" r="7" fill="#00b000"/>
<text x="1249" y="135.5" font-family="Liberation Sans" font-weight="bold" font-size="12" text-anchor="middle" fill="#fff">?</text>
<path d="M1241.04,181.22L1244.96,181.22L1244.98,184.02L1245.83,184.37L1247.82,182.40L1250.60,185.18L1248.63,187.17L1248.98,188.02L1251.78,188.04L1251.78,191.96L1248.98,191.98L1248.63,192.83L1250.60,194.82L1247.82,197.60L1245.83,195.63L1244.98,195.98L1244.96,198.78L1241.04,198.78L1241.02,195.98L1240.17,195.63L1238.18,197.60L1235.40,194.82L1237.37,192.83L1237.02,191.98L1234.22,191.96L1234.22,188.04L1237.02,188.02L1237.37,187.17L1235.40,185.18L1238.18,182.40L1240.17,184.37L1241.02,184.02ZM1247,190A4,4 0 1 0 1239,190A4,4 0 1 0 1247,190Z" fill="#00b000" stroke="#007a00" stroke-width="0.7" fill-rule="evenodd"/>
</svg>
<svg class="a" style="left:47px;top:263px" width="13" height="13" viewBox="0 0 13 13"><path d="M2.5,6.5L5,9.5L10.5,3" stroke="#222" stroke-width="1.2" fill="none"/></svg>
<svg class="a" style="left:51px;top:293px" width="13" height="13" viewBox="0 0 13 13"><path d="M2.5,6.5L5,9.5L10.5,3" stroke="#222" stroke-width="1.2" fill="none"/></svg>
<svg class="a" style="left:51px;top:398px" width="13" height="13" viewBox="0 0 13 13"><path d="M2.5,6.5L5,9.5L10.5,3" stroke="#222" stroke-width="1.2" fill="none"/></svg>
<svg class="a" style="left:360px;top:578px" width="12" height="8" viewBox="0 0 12 8"><path d="M2,2L6,6L10,2" stroke="#333" stroke-width="1.1" fill="none"/></svg>
<svg class="a" style="left:361px;top:659.5px" width="12" height="8" viewBox="0 0 12 8"><path d="M2,2L6,6L10,2" stroke="#333" stroke-width="1.1" fill="none"/></svg>
<svg class="a" style="left:288px;top:230px" width="88" height="22" viewBox="0 0 88 22"><rect x="3.5" y="7" width="32" height="6.5" rx="3.2" fill="#b8b8b8" stroke="#222" stroke-width="1.4"/><ellipse cx="9.0" cy="10.2" rx="2.2" ry="1.8" fill="#e8eee0" stroke="#222" stroke-width="0.9"/><ellipse cx="14.5" cy="10.2" rx="2.2" ry="1.8" fill="#e8eee0" stroke="#222" stroke-width="0.9"/><ellipse cx="20.0" cy="10.2" rx="2.2" ry="1.8" fill="#e8eee0" stroke="#222" stroke-width="0.9"/><ellipse cx="25.5" cy="10.2" rx="2.2" ry="1.8" fill="#e8eee0" stroke="#222" stroke-width="0.9"/><ellipse cx="31.0" cy="10.2" rx="2.2" ry="1.8" fill="#e8eee0" stroke="#222" stroke-width="0.9"/><rect x="40.5" y="4.5" width="17" height="11" fill="#fff" stroke="#bbb" stroke-width="1"/><rect x="41" y="10" width="16" height="5" fill="#dc143c"/><circle cx="71.5" cy="8.7" r="6.5" fill="#bfe0fa" stroke="#aab4bf" stroke-width="1.3"/><path d="M68,7A3.5,3.5 0 0 1 71.5,4.5" stroke="#fff" stroke-width="1.2" fill="none"/><path d="M76.5,14L83,19.5" stroke="#1a4fa0" stroke-width="3"/></svg>
<svg class="a" style="left:288px;top:538px" width="88" height="22" viewBox="0 0 88 22"><rect x="3.5" y="7" width="32" height="6.5" rx="3.2" fill="#b8b8b8" stroke="#555" stroke-width="1.4"/><ellipse cx="9.0" cy="10.2" rx="2.2" ry="1.8" fill="#e8eee0" stroke="#555" stroke-width="0.9"/><ellipse cx="14.5" cy="10.2" rx="2.2" ry="1.8" fill="#e8eee0" stroke="#555" stroke-width="0.9"/><ellipse cx="20.0" cy="10.2" rx="2.2" ry="1.8" fill="#e8eee0" stroke="#555" stroke-width="0.9"/><ellipse cx="25.5" cy="10.2" rx="2.2" ry="1.8" fill="#e8eee0" stroke="#555" stroke-width="0.9"/><ellipse cx="31.0" cy="10.2" rx="2.2" ry="1.8" fill="#e8eee0" stroke="#555" stroke-width="0.9"/><rect x="40.5" y="4.5" width="17" height="11" fill="#fff" stroke="#bbb" stroke-width="1"/><rect x="41" y="10" width="16" height="5" fill="#555"/><circle cx="71.5" cy="8.7" r="6.3" fill="none" stroke="#999" stroke-width="1.3"/><path d="M76,13.5L82,19" stroke="#666" stroke-width="2.5"/></svg>
<svg class="a" style="left:215px;top:767px" width="54" height="48" viewBox="0 0 54 48"><path d="M10.5,8.5H44.5V18.5H35.5V41.5H18.5V18.5H10.5Z" fill="#c8c8c8" stroke="#000" stroke-width="1.6"/><path d="M10,11H45" stroke="#b01010" stroke-width="1"/><path d="M20,11V39H34V11" stroke="#b01010" stroke-width="1" fill="none"/><rect x="21" y="12" width="2.2" height="2.2" fill="#000"/><rect x="24" y="12" width="2.2" height="2.2" fill="#000"/><rect x="27" y="12" width="2.2" height="2.2" fill="#000"/><rect x="30" y="12" width="2.2" height="2.2" fill="#000"/><rect x="21" y="16" width="2.2" height="2.2" fill="#000"/><rect x="30" y="16" width="2.2" height="2.2" fill="#000"/></svg>
<svg class="a" style="left:271px;top:767px" width="54" height="48" viewBox="0 0 54 48"><path d="M10.5,8.5H44.5V18.5H35.5V41.5H18.5V18.5H10.5Z" fill="#c8c8c8" stroke="#000" stroke-width="1.6"/><path d="M10,11H45" stroke="#b01010" stroke-width="1"/><path d="M20,11V39H34V11" stroke="#b01010" stroke-width="1" fill="none"/><rect x="15" y="12" width="2.2" height="2.2" fill="#000"/><rect x="19" y="12" width="2.2" height="2.2" fill="#000"/><rect x="23" y="12" width="2.2" height="2.2" fill="#000"/><rect x="27" y="12" width="2.2" height="2.2" fill="#000"/><rect x="31" y="12" width="2.2" height="2.2" fill="#000"/><rect x="35" y="12" width="2.2" height="2.2" fill="#000"/></svg>
<svg class="a" style="left:327px;top:767px" width="54" height="48" viewBox="0 0 54 48"><path d="M10.5,8.5H44.5V18.5H35.5V41.5H18.5V18.5H10.5Z" fill="#c8c8c8" stroke="#000" stroke-width="1.6"/><path d="M10,11H45" stroke="#b01010" stroke-width="1"/><path d="M20,11V39H34V11" stroke="#b01010" stroke-width="1" fill="none"/><rect x="12" y="12" width="2.2" height="2.2" fill="#000"/><rect x="17" y="12" width="2.2" height="2.2" fill="#000"/><rect x="21" y="12" width="2.2" height="2.2" fill="#000"/><rect x="31" y="12" width="2.2" height="2.2" fill="#000"/><rect x="35" y="12" width="2.2" height="2.2" fill="#000"/><rect x="40" y="12" width="2.2" height="2.2" fill="#000"/></svg>
<!--/ICONS-->
</body></html>
